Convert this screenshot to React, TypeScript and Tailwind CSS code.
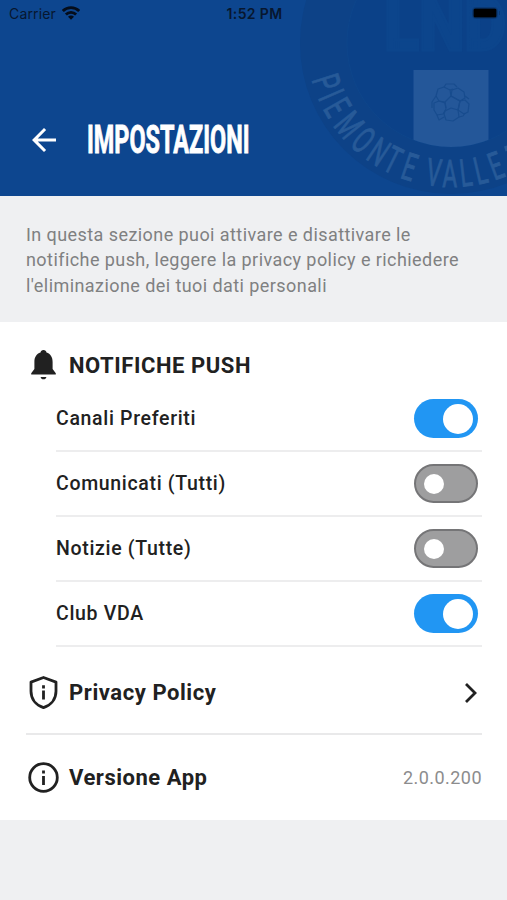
import { MdArrowBack } from 'react-icons/md';

const channels = [
  { label: 'Canali Preferiti', enabled: true },
  { label: 'Comunicati (Tutti)', enabled: false },
  { label: 'Notizie (Tutte)', enabled: false },
  { label: 'Club VDA', enabled: true },
];

// Crest lettering: letter and its angle around the badge, clockwise from the bottom
const crestLetters: [string, number][] = [
  ['P', 72.5],
  ['I', 66.5],
  ['E', 60.5],
  ['M', 51.2],
  ['O', 42],
  ['N', 33.5],
  ['T', 26.4],
  ['E', 18.5],
  ['V', 7.5],
  ['A', 0.5],
  ['L', -6.5],
  ['L', -13],
  ['E', -20],
];

function Crest() {
  return (
    <svg className="absolute right-0 top-0" width="227" height="196" viewBox="280 0 227 196">
      <defs>
        <clipPath id="crest-inner">
          <circle cx="451" cy="43" r="104" />
        </clipPath>
      </defs>
      <circle cx="451" cy="43" r="151" fill="#0d4287" />
      <circle cx="451" cy="43" r="104" fill="#0b4188" stroke="#0e468b" strokeWidth="0.8" />
      <text
        x="384"
        y="50"
        textLength="122"
        lengthAdjust="spacingAndGlyphs"
        fill="#0c458c"
        stroke="#0c458c"
        strokeWidth="3"
        fontFamily="Roboto, sans-serif"
        fontWeight="900"
        fontSize="76"
      >
        LND
      </text>
      <rect x="413.5" y="70" width="75" height="80" fill="#245799" clipPath="url(#crest-inner)" />
      <g fill="none" stroke="#184c8e" strokeWidth="1.2" strokeLinejoin="round">
        <path d="M438 89l6-2 6 3 1 6-6 6-6-1-3-5z" />
        <path d="M452 90l6-2 6 4 1 6-5 3-9-5z" />
        <path d="M434 103l5-2 6 2 1 6-3 5-6 1-3-5z" />
        <path d="M445 111l6-3 7 2 1 7-6 4-7-1-2-6z" />
        <path d="M460 101l5-1 4 4-1 8-4 2-6-4z" />
        <path d="M445 102l1 6M451 96l9 5M458 110l2-9M450 90l3-1M444 87l2-3h8l3 3M436 96l-4 6v6M437 115l2 5 5-3M459 117l4-1 2-3M465 96l4 3" />
      </g>
      {crestLetters.map(([letter, angle], i) => (
        <text
          key={i}
          transform={`translate(451 43) rotate(${angle}) translate(0 144) scale(0.6 1)`}
          textAnchor="middle"
          fill="#275a98"
          stroke="#275a98"
          strokeWidth="0.9"
          fontFamily="Roboto, sans-serif"
          fontSize="38"
        >
          {letter}
        </text>
      ))}
      <path d="M505.5 146l1.5 5" stroke="#275a98" strokeWidth="3" />
    </svg>
  );
}

function StatusBar() {
  return (
    <div className="relative grid h-7 grid-cols-3 items-center pl-[9px] pr-1.5 font-['Inter',sans-serif] text-[14px] text-[#07172f]">
      <div className="-mt-0.5 flex items-center gap-1.5">
        <span className="tracking-[0.15px]">Carrier</span>
        <svg width="18" height="14" viewBox="0 0 18 14" fill="none" stroke="#050d1a" strokeWidth="2.8">
          <path d="M.8 5a11.5 11.5 0 0 1 16.4 0M3.9 8.500a7.200 7.200 0 0 1 10.200 0" />
          <path d="M9 13.800L6 10.800a4.200 4.200 0 0 1 6 0z" fill="#050d1a" stroke="none" />
        </svg>
      </div>
      <span className="-mt-0.5 -ml-px text-center font-semibold tracking-[0.35px]">1:52 PM</span>
      <svg className="-mt-0.5 justify-self-end" width="29" height="12" viewBox="0 0 29 12">
        <rect x="0.5" y="0.5" width="25" height="11" rx="3" fill="none" stroke="#0a3974" />
        <rect x="1.5" y="1.5" width="23" height="9" rx="1.5" fill="#000" />
        <path d="M27.5 4v4" stroke="#0a3974" />
      </svg>
    </div>
  );
}

function BellIcon() {
  return (
    <svg width="35" height="34" viewBox="0 0 35 34" fill="#212121">
      <path d="M17.500 2c1.700 0 2.800 1 3 2.600 4 1.300 6.100 4.700 6.100 9.300V21l3.200 4.300v1.200H5.200v-1.200L8.400 21v-7.100c0-4.600 2.100-8 6.100-9.300.2-1.600 1.300-2.600 3-2.600z" />
      <path d="M14.600 29h5.800c-.3 1.500-1.300 2.300-2.900 2.300s-2.600-.8-2.900-2.300z" />
    </svg>
  );
}

function ShieldIcon() {
  return (
    <svg width="35" height="36" viewBox="0 0 35 36" fill="none" stroke="#212121" strokeWidth="2.8">
      <path d="M17.500 2.500L30 7.100v9.100c0 8-5 14-12.500 16.500C10 30.200 5 24.200 5 16.200V7.100z" strokeLinejoin="round" />
      <path d="M17.500 15.500v9M17.500 10.200v3.200" />
    </svg>
  );
}

function InfoIcon() {
  return (
    <svg width="35" height="34" viewBox="0 0 35 34" fill="none" stroke="#212121" strokeWidth="2.8">
      <circle cx="17.5" cy="16.5" r="13.8" />
      <path d="M17.500 15v9M17.500 9.500v3" />
    </svg>
  );
}

function Toggle({ enabled }: { enabled: boolean }) {
  return enabled ? (
    <span role="switch" aria-checked="true" className="flex h-[39px] w-16 items-center justify-end rounded-full bg-[#2196f3] pr-[5px]">
      <span className="size-[30px] rounded-full bg-white" />
    </span>
  ) : (
    <span role="switch" aria-checked="false" className="flex h-[39px] w-16 items-center rounded-full border-2 border-[#757577] bg-[#9e9e9f] pl-[7.5px]">
      <span className="size-5 rounded-full bg-white" />
    </span>
  );
}

export default function App() {
  return (
    <div className="flex h-[900px] w-[507px] flex-col overflow-hidden bg-[#eff0f2] font-['Roboto',sans-serif] text-[#212121]">
      <header className="relative h-[196px] shrink-0 overflow-hidden bg-[#0d468f]">
        <Crest />
        <StatusBar />
        <div className="relative mt-[84px] flex h-14 items-center pl-[26px] text-white">
          <MdArrowBack size={36} />
          <h1 className="ml-[25px] h-14 w-[164px] origin-left scale-x-[0.593] whitespace-nowrap text-[39.5px] leading-[56px] font-bold [-webkit-text-stroke:0.9px_white]">
            IMPOSTAZIONI
          </h1>
        </div>
      </header>

      <p className="h-[126px] shrink-0 whitespace-pre-line pl-[26px] pt-[25.5px] text-[18px] leading-[25.6px] tracking-[0.43px] text-[#7f8081]">
        {`In questa sezione puoi attivare e disattivare le
        notifiche push, leggere la privacy policy e richiedere
        l'eliminazione dei tuoi dati personali`}
      </p>

      <main className="h-[498px] shrink-0 bg-white pl-[26px] pr-[25px] pt-[26px]">
        <section>
          <div className="flex h-[34px] items-center gap-2">
            <BellIcon />
            <h2 className="text-[22px] font-bold tracking-[0.57px]">NOTIFICHE PUSH</h2>
          </div>
          <ul className="ml-[30px] pt-[5px]">
            {channels.map(({ label, enabled }) => (
              <li key={label} className="flex h-[65px] items-center justify-between border-b-2 border-[#ededee] pr-1">
                <span className="pt-px text-[19.5px] font-medium tracking-[0.67px]">{label}</span>
                <Toggle enabled={enabled} />
              </li>
            ))}
          </ul>
        </section>

        <div className="flex h-[88px] items-center gap-2 border-b-2 border-[#e9e9ea] pt-[5px]">
          <ShieldIcon />
          <span className="text-[22px] font-bold tracking-[0.57px]">Privacy Policy</span>
          <svg className="ml-auto mr-1" width="16" height="22" viewBox="0 0 16 22" fill="none" stroke="#212121" strokeWidth="2.8">
            <path d="M4 2l9 9-9 9" />
          </svg>
        </div>

        <div className="flex h-[85px] items-center gap-2">
          <InfoIcon />
          <span className="text-[22px] font-bold tracking-[0.52px]">Versione App</span>
          <span className="ml-auto text-[18px] tracking-[0.45px] text-[#8c8c8d]">2.0.0.200</span>
        </div>
      </main>
    </div>
  );
}
